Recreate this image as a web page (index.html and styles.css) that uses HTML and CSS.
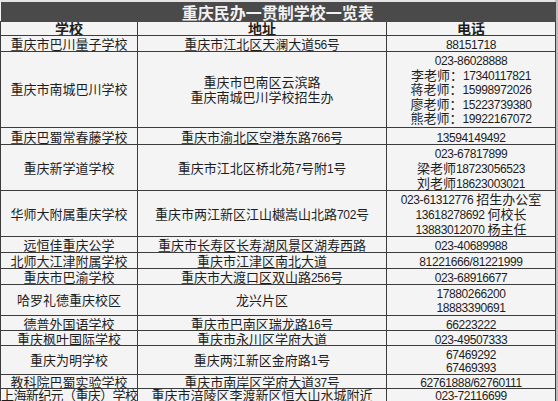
FILE: index.html
```html
<!DOCTYPE html>
<html lang="zh-CN">
<head>
<meta charset="utf-8">
<title>重庆民办一贯制学校一览表</title>
<link rel="stylesheet" href="styles.css">
</head>
<body>
<div class="page">
<table class="sheet">
<colgroup><col class="c-school"><col class="c-addr"><col class="c-tel"></colgroup>
<thead>
<tr class="title"><th colspan="3">重庆民办一贯制学校一览表</th></tr>
<tr class="head"><th>学校</th><th>地址</th><th>电话</th></tr>
</thead>
<tbody>
<tr class="h16"><td>重庆市巴川量子学校</td><td>重庆市江北区天澜大道<span class="n">56</span>号</td><td><span class="n">88151718</span></td></tr>
<tr class="h76"><td>重庆市南城巴川学校</td><td>重庆市巴南区云滨路<br>重庆南城巴川学校招生办</td><td><span class="n">023-86028888</span><br>李老师：<span class="n">17340117821</span><br>蒋老师：<span class="n">15998972026</span><br>廖老师：<span class="n">15223739380</span><br>熊老师：<span class="n">19922167072</span></td></tr>
<tr class="h17"><td>重庆巴蜀常春藤学校</td><td>重庆市渝北区空港东路<span class="n">766</span>号</td><td><span class="n">13594149492</span></td></tr>
<tr class="h46"><td>重庆新学道学校</td><td>重庆市江北区桥北苑<span class="n">7</span>号附<span class="n">1</span>号</td><td><span class="n">023-67817899</span><br>梁老师<span class="n">18723056523</span><br>刘老师<span class="n">18623003021</span></td></tr>
<tr class="h43"><td>华师大附属重庆学校</td><td>重庆市两江新区江山樾嵩山北路<span class="n">702</span>号</td><td><span class="n">023-61312776</span> 招生办公室<br><span class="n">13618278692</span> 何校长<br><span class="n">13883012070</span> 杨主任</td></tr>
<tr class="h16"><td>远恒佳重庆公学</td><td>重庆市长寿区长寿湖风景区湖寿西路</td><td><span class="n">023-40689988</span></td></tr>
<tr class="h16"><td>北师大江津附属学校</td><td>重庆市江津区南北大道</td><td><span class="n">81221666/81221999</span></td></tr>
<tr class="h16"><td>重庆市巴渝学校</td><td>重庆市大渡口区双山路<span class="n">256</span>号</td><td><span class="n">023-68916677</span></td></tr>
<tr class="h31"><td>哈罗礼德重庆校区</td><td>龙兴片区</td><td><span class="n">17880266200</span><br><span class="n">18883390691</span></td></tr>
<tr class="h15"><td>德普外国语学校</td><td>重庆市巴南区瑞龙路<span class="n">16</span>号</td><td><span class="n">66223222</span></td></tr>
<tr class="h15"><td>重庆枫叶国际学校</td><td>重庆市永川区学府大道</td><td><span class="n">023-49507333</span></td></tr>
<tr class="h29"><td>重庆为明学校</td><td>重庆两江新区金府路<span class="n">1</span>号</td><td><span class="n">67469292</span><br><span class="n">67469393</span></td></tr>
<tr class="h14"><td>教科院巴蜀实验学校</td><td>重庆市南岸区学府大道<span class="n">37</span>号</td><td><span class="n">62761888/62760111</span></td></tr>
<tr class="h13"><td class="tight">上海新纪元（重庆）学校</td><td>重庆市涪陵区李渡新区恒大山水城附近</td><td><span class="n">023-72116699</span></td></tr>
</tbody>
</table>
</div>
</body>
</html>
```

FILE: styles.css
```css
html, body {
  margin: 0;
  padding: 0;
}

body {
  background: #e4e4e4;
  width: 558px;
  height: 401px;
  overflow: hidden;
  font-family: "Noto Sans CJK SC", "Liberation Sans", sans-serif;
  color: #1e1e1e;
}

.page {
  padding-top: 2px;
  width: 555px;
  border-right: 3px solid #bdbdbd;
  height: 399px;
  background: #e4e4e4;
}

.sheet {
  border-collapse: collapse;
  table-layout: fixed;
  width: 555px;
  background: #f4f4f4;
}

.c-school { width: 137px; }
.c-addr { width: 249px; }
.c-tel { width: 169px; }

.sheet th,
.sheet td {
  box-sizing: border-box;
  border: 1px solid #3c3c3c;
  padding: 0;
  text-align: center;
  vertical-align: middle;
  font-size: 13px;
  line-height: 13px;
  white-space: nowrap;
  overflow: hidden;
}

.title th {
  background: #4a4a4a;
  color: #f2f2f2;
  font-size: 16px;
  font-weight: 600;
  height: 19px;
  line-height: 16px;
  border-color: #4a4a4a;
  border-left: none;
}

.head th {
  font-size: 14px;
  font-weight: 700;
  height: 14px;
  line-height: 13px;
}

.h13 td { height: 13px; line-height: 12px; }
.h14 td { height: 14px; line-height: 12px; }
.h15 td { height: 15px; }
.h16 td { height: 16px; }
.h17 td { height: 17px; }
.h29 td { height: 29px; line-height: 13.5px; }
.h31 td { height: 31px; line-height: 14px; }
.h43 td { height: 43px; line-height: 15px; }
.h46 td { height: 46px; line-height: 15px; }
.h76 td { height: 76px; line-height: 14.5px; }

.n {
  font-family: "Liberation Sans", sans-serif;
  font-size: 12px;
  line-height: 0;
  letter-spacing: -0.4px;
}

.tight {
  letter-spacing: -0.6px;
}
```
